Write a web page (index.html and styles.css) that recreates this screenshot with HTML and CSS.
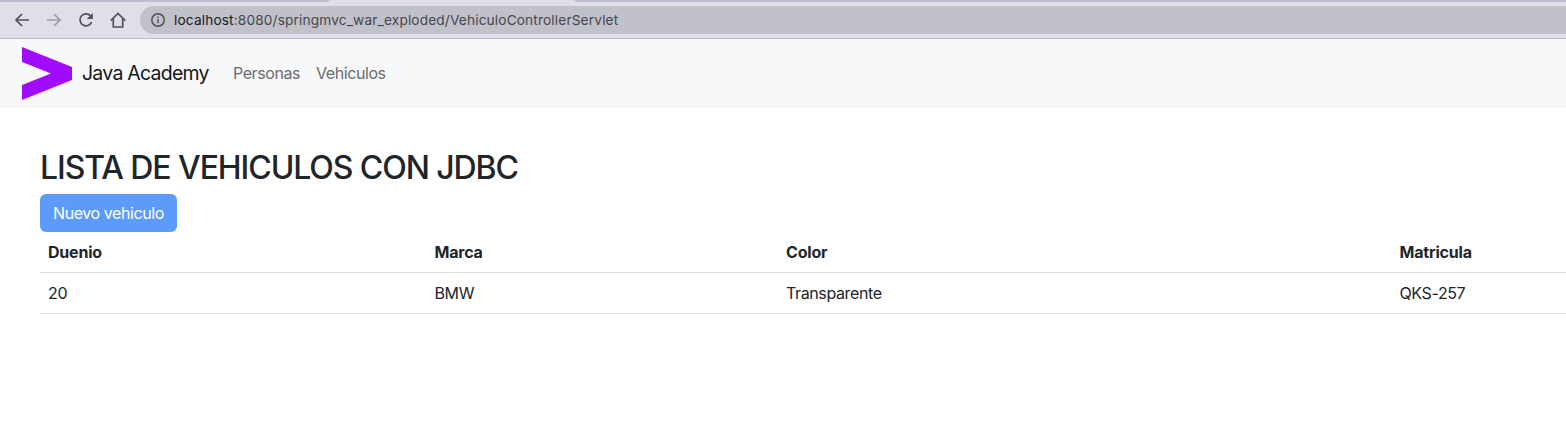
FILE: index.html
```html
<!DOCTYPE html>
<html lang="es">
<head>
<meta charset="utf-8">
<title>Java Academy</title>
<link rel="stylesheet" href="styles.css">
</head>
<body>
<div class="tabs"><span class="tab tab-left"></span><span class="tab tab-right"></span></div>
<div class="toolbar">
  <svg class="icon" viewBox="0 0 20 20"><path d="M17 10H4.3M10 4l-6 6 6 6"/></svg>
  <svg class="icon disabled" viewBox="0 0 20 20"><path d="M3 10h12.7M10 4l6 6-6 6"/></svg>
  <svg class="icon" viewBox="0 0 20 20"><path d="M15.6 12A6 6 0 1 1 14.4 5.7L16 7.300"/><path class="solid" d="M16.800 3v6h-6z"/></svg>
  <svg class="icon" viewBox="0 0 20 20"><path d="M2.700 10.700 10 3.400l7.300 7.300M5.300 9v8h9.400V9"/></svg>
  <div class="address">
    <svg class="info" viewBox="0 0 16 16"><circle cx="8" cy="8" r="6.200"/><path d="M8 7.200v4M8 4.500v1.500"/></svg>
    <span class="url"><span class="host">localhost</span>:8080/springmvc_war_exploded/VehiculoControllerServlet</span>
  </div>
</div>
<nav class="navbar">
  <svg class="logo" viewBox="0 0 50 53"><path d="M0 0 50 20V33L0 53V38L29 26.500 0 15z"/></svg>
  <a class="brand">Java Academy</a>
  <a class="link personas">Personas</a>
  <a class="link vehiculos">Vehiculos</a>
</nav>
<main>
  <h2>LISTA DE VEHICULOS CON JDBC</h2>
  <button class="button">Nuevo vehiculo</button>
  <table>
    <colgroup><col class="c1"><col class="c2"><col class="c3"><col class="c4"></colgroup>
    <thead><tr><th>Duenio</th><th>Marca</th><th>Color</th><th>Matricula</th></tr></thead>
    <tbody><tr><td>20</td><td>BMW</td><td>Transparente</td><td>QKS-257</td></tr></tbody>
  </table>
</main>
</body>
</html>
```
FILE: styles.css
```css
* { box-sizing: border-box; }
body { margin: 0; height: 436px; overflow: hidden; background: #fff; color: #212529; font: 16px/24px Inter, "Liberation Sans", sans-serif; }
.tabs { height: 2px; display: flex; justify-content: space-between; background: #dfdfe8; }
.tab { background: #bdbbcf; }
.tab-left { width: 329px; border-bottom-right-radius: 3px; }
.tab-right { width: 991px; border-bottom-left-radius: 3px; }
.toolbar { height: 37px; display: flex; align-items: center; gap: 12px; padding: 0 0 1px 12px; background: #dfdfe8; border-bottom: 1px solid #bcbbc4; }
.icon { width: 20px; height: 20px; flex: none; fill: none; stroke: #505156; stroke-width: 1.7; }
.disabled { stroke: #9c9ca5; }
.solid { fill: #505156; stroke: none; }
.address { flex: 1; height: 28px; padding-left: 10px; display: flex; align-items: center; gap: 8px; border-radius: 14px 0 0 14px; background: #c1c1ca; }
.info { width: 16px; height: 16px; fill: none; stroke: #505156; stroke-width: 1.5; }
.url { color: #46474c; font-size: 13.7px; line-height: 20px; letter-spacing: .14px; white-space: nowrap; }
.host { color: #18191c; }
.navbar { height: 69px; display: flex; align-items: center; padding-left: 22px; background: #f7f8fa; }
.logo { width: 50px; height: 53px; margin-right: 10px; fill: #a10cff; }
.brand { width: 151px; padding-bottom: 2px; color: #151618; font-size: 19.5px; letter-spacing: -.76px; white-space: nowrap; }
.link { padding-bottom: 2px; color: #6b6c6e; letter-spacing: -.42px; }
.personas { width: 83px; }
main { padding: 40px 0 0 40px; }
h2 { height: 38px; margin: 0 0 8px; padding-top: 1px; font-size: 32px; line-height: 38px; font-weight: 500; letter-spacing: -1.08px; white-space: nowrap; }
.button { display: block; width: 137px; height: 38px; padding: 0; border: 0; border-radius: 6px; background: #5c9bfa; color: #fff; font: inherit; letter-spacing: -.42px; white-space: nowrap; }
table { width: 100%; table-layout: fixed; border-collapse: separate; border-spacing: 0; }
.c1 { width: 386.5px; }
.c2 { width: 351.5px; }
.c3 { width: 613.5px; }
th, td { height: 41px; padding: 8px; border-bottom: 1px solid #dadfe2; text-align: left; letter-spacing: -.38px; }
th { font-weight: 700; letter-spacing: -.2px; }
```
